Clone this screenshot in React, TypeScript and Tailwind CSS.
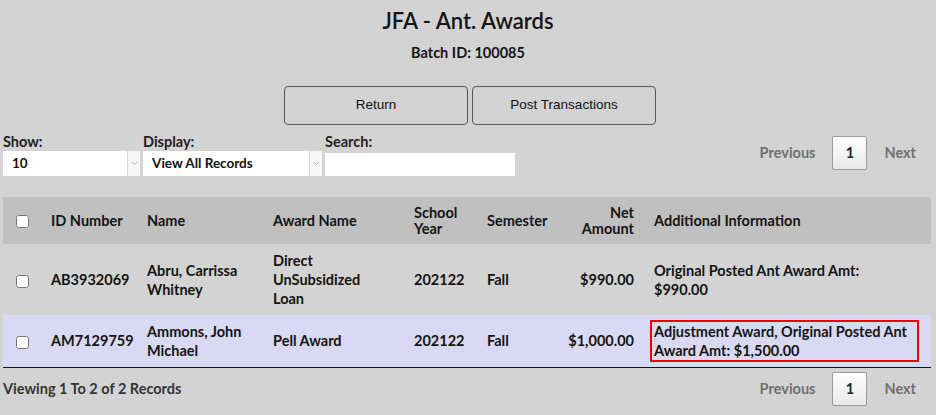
import React from 'react';

interface AwardRow {
  id: string;
  name: string;
  award: string;
  year: string;
  semester: string;
  amount: string;
  info: string;
  highlight?: boolean;
}

const rows: AwardRow[] = [
  {
    id: 'AB3932069',
    name: 'Abru, Carrissa Whitney',
    award: 'Direct UnSubsidized Loan',
    year: '202122',
    semester: 'Fall',
    amount: '$990.00',
    info: 'Original Posted Ant Award Amt: $990.00',
  },
  {
    id: 'AM7129759',
    name: 'Ammons, John Michael',
    award: 'Pell Award',
    year: '202122',
    semester: 'Fall',
    amount: '$1,000.00',
    info: 'Adjustment Award, Original Posted Ant Award Amt: $1,500.00',
    highlight: true,
  },
];

const Chevron = () => (
  <svg width="7" height="5" viewBox="0 0 7 5" fill="none">
    <path d="M1 1l2.5 2.5L6 1" stroke="#b5b5b5" strokeWidth="1" />
  </svg>
);

const FakeSelect: React.FC<{ value: string; width: string }> = ({ value, width }) => (
  <div className={`flex h-[25px] ${width}`}>
    <div className="flex flex-1 items-center bg-white pl-[9px] text-[13.5px] font-bold text-[#111]">
      {value}
    </div>
    <div className="flex w-[13px] items-center justify-center border-l border-[#d8d8d8] bg-[#f6f6f6]">
      <Chevron />
    </div>
  </div>
);

const Pager = () => (
  <div className="flex items-center pr-[20px] text-[14.5px] font-bold text-[#6f6f6f]">
    <span>Previous</span>
    <span className="mx-[17px] flex h-[34px] w-[35px] items-center justify-center rounded-[2px] border border-[#9a9a9a] bg-gradient-to-b from-white to-[#e9e9e9] text-[#222]">
      1
    </span>
    <span>Next</span>
  </div>
);

export default function App() {
  return (
    <div className="min-h-screen bg-[#d3d3d3] font-['Lato',sans-serif] text-[#141414]">
      <div className="pt-[7px] text-center text-[22px] leading-[28px] font-semibold">JFA - Ant. Awards</div>
      <div className="mt-[9px] text-center text-[14.5px] leading-[18px] font-bold">Batch ID: 100085</div>

      <div className="mt-[24px] flex justify-center gap-[4px] pl-[4px]">
        <button className="h-[39px] w-[184px] rounded-[4px] border border-[#5a5a5a] font-['Liberation_Sans',Arial,sans-serif] text-[13.5px] text-[#111]">
          Return
        </button>
        <button className="h-[39px] w-[184px] rounded-[4px] border border-[#5a5a5a] font-['Liberation_Sans',Arial,sans-serif] text-[13.5px] text-[#111]">
          Post Transactions
        </button>
      </div>

      <div className="mt-[7px] flex items-start justify-between pl-[3px]">
        <div className="flex gap-[3px]">
          <div>
            <div className="text-[14.5px] leading-[19px] font-bold text-[#222]">Show:</div>
            <FakeSelect value="10" width="w-[137px]" />
          </div>
          <div>
            <div className="text-[14.5px] leading-[19px] font-bold text-[#222]">Display:</div>
            <FakeSelect value="View All Records" width="w-[179px]" />
          </div>
          <div>
            <div className="text-[14.5px] leading-[19px] font-bold text-[#222]">Search:</div>
            <input className="h-[23px] w-[190px] bg-white px-1 text-[13px] outline-none" />
          </div>
        </div>
        <div className="pt-[4px]">
          <Pager />
        </div>
      </div>

      <div className="mt-[21px] px-[3px]">
        <table className="w-[928px] table-fixed border-collapse text-left text-[14.5px] font-bold">
          <colgroup>
            <col className="w-[38px]" />
            <col className="w-[96px]" />
            <col className="w-[126px]" />
            <col className="w-[141px]" />
            <col className="w-[73px]" />
            <col className="w-[83px]" />
            <col className="w-[84px]" />
            <col className="w-[287px]" />
          </colgroup>
          <thead>
            <tr className="h-[47px] bg-[#c0c0c0] leading-[16px]">
              <th className="text-center align-middle">
                <input type="checkbox" className="m-0 align-middle" />
              </th>
              <th className="pl-[10px] font-bold">ID Number</th>
              <th className="pl-[10px] font-bold">Name</th>
              <th className="pl-[10px] font-bold">Award Name</th>
              <th className="pl-[10px] font-bold">School Year</th>
              <th className="pl-[10px] font-bold">Semester</th>
              <th className="pr-[10px] text-right font-bold">Net Amount</th>
              <th className="pl-[10px] font-bold">Additional Information</th>
            </tr>
          </thead>
          <tbody className="leading-[19px]">
            {rows.map((r) => (
              <tr
                key={r.id}
                className={r.highlight ? 'h-[52px] border-b border-[#111] bg-[#d9d9f3]' : 'h-[71px]'}
              >
                <td className="text-center align-middle">
                  <input type="checkbox" className="m-0 align-middle" />
                </td>
                <td className="pl-[10px]">{r.id}</td>
                <td className="pl-[10px] pr-[6px]">{r.name}</td>
                <td className="pl-[10px] pr-[10px]">{r.award}</td>
                <td className="pl-[10px]">{r.year}</td>
                <td className="pl-[10px]">{r.semester}</td>
                <td className="pr-[10px] text-right">{r.amount}</td>
                <td className="pl-[10px] pr-[10px]">
                  {r.highlight ? (
                    <div className="ml-[-4px] w-[269px] border-2 border-[#ee0000] px-[2px]">{r.info}</div>
                  ) : (
                    <div className="pr-[40px]">{r.info}</div>
                  )}
                </td>
              </tr>
            ))}
          </tbody>
        </table>
      </div>

      <div className="mt-[4px] flex items-center justify-between pl-[3px]">
        <div className="text-[14.5px] font-bold text-[#333]">Viewing 1 To 2 of 2 Records</div>
        <Pager />
      </div>
    </div>
  );
}
